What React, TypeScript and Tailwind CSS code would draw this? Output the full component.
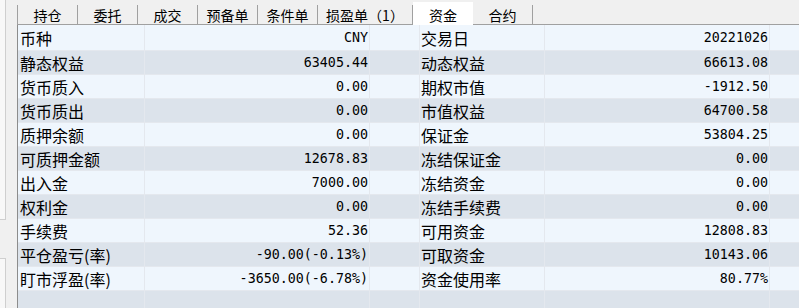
const TABS = [
  { label: '持仓', w: 'w-[60px]' },
  { label: '委托', w: 'w-[60px]' },
  { label: '成交', w: 'w-[60px]' },
  { label: '预备单', w: 'w-[60px]' },
  { label: '条件单', w: 'w-[60px]' },
  { label: '损盈单（1）', w: 'w-[95px]' },
  { label: '资金', w: 'w-[60px]', active: true },
  { label: '合约', w: 'w-[60px]' },
];

const ROWS: [string, string, string, string][] = [
  ['币种', 'CNY', '交易日', '20221026'],
  ['静态权益', '63405.44', '动态权益', '66613.08'],
  ['货币质入', '0.00', '期权市值', '-1912.50'],
  ['货币质出', '0.00', '市值权益', '64700.58'],
  ['质押余额', '0.00', '保证金', '53804.25'],
  ['可质押金额', '12678.83', '冻结保证金', '0.00'],
  ['出入金', '7000.00', '冻结资金', '0.00'],
  ['权利金', '0.00', '冻结手续费', '0.00'],
  ['手续费', '52.36', '可用资金', '12808.83'],
  ['平仓盈亏(率)', '-90.00(-0.13%)', '可取资金', '10143.06'],
  ['盯市浮盈(率)', '-3650.00(-6.78%)', '资金使用率', '80.77%'],
  ['', '', '', ''],
];

const cjk = "font-['Noto_Sans_CJK_SC',sans-serif]";
const mono = "font-['DejaVu_Sans_Mono','Noto_Sans_CJK_SC',monospace]";

export default function App() {
  return (
    <div className="flex w-[799px] h-[308px] overflow-hidden bg-[#f0f0f0] text-black">
      {/* left dock edge */}
      <div className="flex flex-col w-[17px] shrink-0">
        <div className="h-[220px] w-[6px] bg-[#f8f8f8] border-r border-b border-[#cfcfcf]" />
        <div className="h-[38px]" />
        <div className="flex-1 w-[6px] bg-[#f8f8f8] border-r border-t border-[#cfcfcf]" />
      </div>

      <div className="flex flex-col flex-1 min-w-0">
        {/* tabs */}
        <div className={`flex items-end h-[25px] border-b border-[#a0a0a0] ${cjk} text-[14px]`}>
          <div className="w-px h-[19px] bg-[#a0a0a0]" />
          {TABS.map((t) =>
            t.active ? (
              <div
                key={t.label}
                className={`${t.w} h-[23px] -mb-px bg-white flex items-center justify-center leading-none pt-[2px]`}
              >
                {t.label}
              </div>
            ) : (
              <div
                key={t.label}
                className={`${t.w} h-[19px] flex items-center justify-center leading-none border-r border-[#a0a0a0]`}
              >
                {t.label}
              </div>
            )
          )}
        </div>

        {/* fund grid */}
        <div className="flex-1 border-l border-[#8c8c8c] overflow-hidden">
          <div className="grid grid-cols-[127px_225px_50px_125px_225px_50px] w-[802px]">
            {ROWS.map((r, i) => {
              const bg = i % 2 === 0 ? 'bg-[#eff6fd]' : 'bg-[#dce3eb]';
              const h = i === 0 ? 'h-[26px]' : 'h-[24px]';
              const cell = `${bg} ${h} border-r border-b border-[#e4e8ee] flex items-center`;
              return (
                <div key={i} className="contents">
                  <div className={`${cell} pl-[2px] ${cjk} text-[16px] leading-none`}>{r[0]}</div>
                  <div className={`${cell} justify-end pr-[1px] ${mono} text-[13.33px] leading-none`}>{r[1]}</div>
                  <div className={cell} />
                  <div className={`${cell} pl-[1px] ${cjk} text-[16px] leading-none`}>{r[2]}</div>
                  <div className={`${cell} justify-end pr-[1px] ${mono} text-[13.33px] leading-none`}>{r[3]}</div>
                  <div className={cell} />
                </div>
              );
            })}
          </div>
        </div>
      </div>
    </div>
  );
}
